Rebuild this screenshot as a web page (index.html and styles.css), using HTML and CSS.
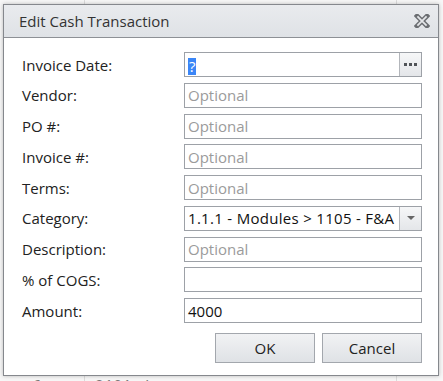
FILE: index.html
```html
<!DOCTYPE html>
<html lang="en">
<head>
    <meta charset="UTF-8">
    <meta name="viewport" content="width=device-width, initial-scale=1.0">
    <title>Edit Cash Transaction</title>
    <link rel="stylesheet" href="styles.css">
</head>
<body>
    <div class="grid">
        <div class="grid-row"><span class="c1"></span><span class="c2"></span><span class="c3"></span></div>
        <div class="grid-row last"><span class="c1">6</span><span class="c2">2101 - Inverter</span><span class="c3"></span></div>
    </div>

    <div class="dialog">
        <div class="titlebar">
            <span class="title">Edit Cash Transaction</span>
            <svg class="close" width="16" height="14" viewBox="0 0 16 14">
                <path d="M3 2 L13 12 M13 2 L3 12" stroke="#6b6e72" stroke-width="4.6" stroke-linecap="square" fill="none"/>
                <path d="M3.4 2.4 L12.6 11.6 M12.6 2.4 L3.4 11.6" stroke="#e4e6e9" stroke-width="1.8" stroke-linecap="butt" fill="none"/>
            </svg>
        </div>
        <div class="content">
            <form class="fields">
                <label>Invoice Date:</label>
                <div class="box with-btn">
                    <span class="value"><span class="selected">?</span></span>
                    <span class="side-btn">
                        <svg width="13" height="3" viewBox="0 0 13 3">
                            <rect x="0" y="0" width="3" height="3" fill="#505357"/>
                            <rect x="5" y="0" width="3" height="3" fill="#505357"/>
                            <rect x="10" y="0" width="3" height="3" fill="#505357"/>
                        </svg>
                    </span>
                </div>

                <label>Vendor:</label>
                <div class="box"><span class="placeholder">Optional</span></div>

                <label>PO #:</label>
                <div class="box"><span class="placeholder">Optional</span></div>

                <label>Invoice #:</label>
                <div class="box"><span class="placeholder">Optional</span></div>

                <label>Terms:</label>
                <div class="box"><span class="placeholder">Optional</span></div>

                <label>Category:</label>
                <div class="box with-btn">
                    <span class="value category">1.1.1 - Modules &gt; 1105 - F&amp;A</span>
                    <span class="side-btn"><span class="arrow"></span></span>
                </div>

                <label>Description:</label>
                <div class="box"><span class="placeholder">Optional</span></div>

                <label>% of COGS:</label>
                <div class="box"></div>

                <label>Amount:</label>
                <div class="box"><span class="value">4000</span></div>
            </form>
            <div class="buttons">
                <button type="button" class="btn">OK</button>
                <button type="button" class="btn">Cancel</button>
            </div>
        </div>
    </div>
</body>
</html>
```

FILE: styles.css
```css
body {
    margin: 0;
    height: 381px;
    overflow: hidden;
    background-color: #f7f7f7;
    font-family: "Open Sans", "Noto Sans", sans-serif;
    position: relative;
}

/* grid that sits behind the dialog */
.grid-row {
    display: flex;
    height: 376px;
    color: #7a7a7a;
    font-size: 16px;
}
.grid-row.last {
    height: 5px;
    overflow: hidden;
    line-height: 20px;
}
.grid-row span {
    display: block;
    border-right: 1px solid #dcdcdc;
}
.grid-row .c1 {
    width: 85px;
    padding-left: 32px;
    box-sizing: border-box;
}
.grid-row .c2 {
    width: 301px;
    padding-left: 10px;
}
.grid-row .c3 {
    flex: 1;
    border-right: none;
}

.dialog {
    position: absolute;
    left: 3px;
    top: 4px;
    width: 436px;
    height: 372px;
    box-sizing: border-box;
    border: 1px solid #85888d;
    background-color: #fff;
    box-shadow: 0 0 4px rgba(0, 0, 0, 0.25);
}
.titlebar {
    height: 32px;
    border-bottom: 1px solid #8d9095;
    background: linear-gradient(#e9ebee, #dfe2e6);
    display: flex;
    align-items: center;
    justify-content: space-between;
    padding: 0 8px 0 15px;
}
.title {
    font-size: 15px;
    color: #333;
}
.close {
    display: block;
}
.content {
    padding: 14px 16px 0 18px;
}
.fields {
    display: grid;
    grid-template-columns: 162px 238px;
    row-gap: 5.75px;
    align-items: center;
    margin: 0;
}
.fields label {
    font-size: 15px;
    color: #222;
}
.box {
    height: 25px;
    box-sizing: border-box;
    border: 1px solid #9da1a7;
    display: flex;
    align-items: center;
    font-size: 15px;
    background: #fff;
    overflow: hidden;
}
.box .value,
.box .placeholder {
    padding-left: 3px;
    flex: 1;
    white-space: nowrap;
}
.placeholder {
    color: #9b9b9b;
}
.value {
    color: #111;
}
.category {
    letter-spacing: 0.3px;
}
.selected {
    display: inline-block;
    vertical-align: middle;
    line-height: 17px;
    background-color: #3b86f7;
    color: #fff;
    padding: 0 1px;
}
.side-btn {
    width: 21px;
    flex: none;
    height: 100%;
    border-left: 1px solid #b3b6bb;
    background: linear-gradient(#f6f7f8, #e4e6e9);
    display: flex;
    align-items: center;
    justify-content: center;
}
.arrow {
    width: 0;
    height: 0;
    border-left: 4px solid transparent;
    border-right: 4px solid transparent;
    border-top: 4px solid #666;
}
.buttons {
    display: flex;
    justify-content: flex-end;
    gap: 7px;
    margin-top: 10px;
}
.btn {
    width: 100px;
    height: 30px;
    border: 1px solid #a3a7ad;
    background: linear-gradient(#f1f2f4, #dfe2e6);
    font-family: inherit;
    font-size: 15px;
    color: #222;
    padding: 0;
}
```
